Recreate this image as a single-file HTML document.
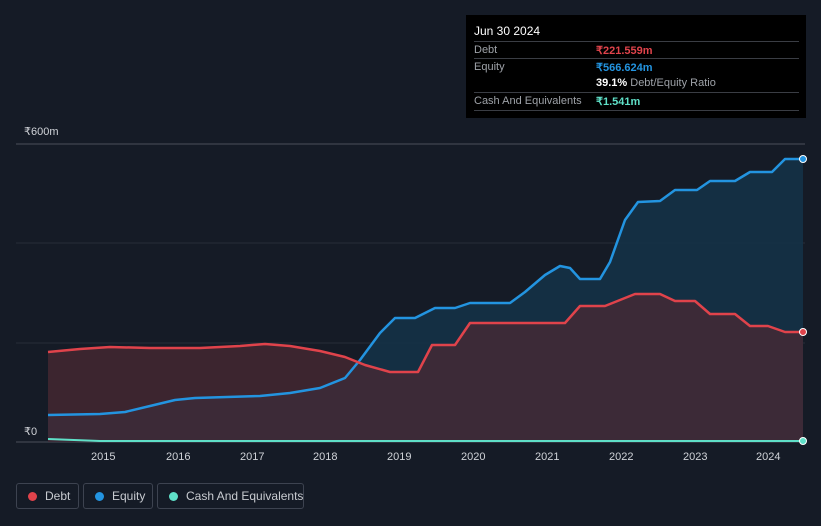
<!DOCTYPE html>
<html><head><meta charset="utf-8"><style>
body{margin:0;width:821px;height:526px;background:#151b26;font-family:"Liberation Sans",sans-serif;overflow:hidden;position:relative}
.tt{position:absolute;left:466px;top:15px;width:340px;height:103px;background:#000;color:#fff;font-size:11px}
.tt .h{position:absolute;left:8px;top:9px;font-size:12px}
.row{position:absolute;left:8px;width:325px;border-top:1px solid #3a3d44;height:17px}
.row span{position:absolute;top:2px;white-space:nowrap}
.lab{left:0;color:#9ea2a8}
.val{left:122px;font-weight:bold}
.leg{position:absolute;top:483px;height:26px;border:1px solid #3d4350;border-radius:3px;color:#c8cbd0;font-size:12px;box-sizing:border-box;white-space:nowrap}
.leg i{position:absolute;left:11px;top:8px;width:9px;height:9px;border-radius:50%}
.leg span{position:absolute;left:28px;top:5px}
.ax{position:absolute;color:#d0d3d8;font-size:11px}
</style></head><body>
<svg width="821" height="526" style="position:absolute;left:0;top:0">
<line x1="16" y1="144" x2="805" y2="144" stroke="#4a4f59" stroke-width="1"/>
<line x1="16" y1="243" x2="805" y2="243" stroke="#262c38" stroke-width="1"/>
<line x1="16" y1="343" x2="805" y2="343" stroke="#262c38" stroke-width="1"/>
<line x1="16" y1="442" x2="805" y2="442" stroke="#4a4f59" stroke-width="1"/>
<polygon fill="#143249" fill-opacity="0.85" points="48,415 100,414 125,412 150,406 175,400 195,398 260,396 290,393 320,388 345,378 360,360 380,333 395,318 415,318 435,308 455,308 470,303 510,303 525,292 545,275 560,266 570,268 580,279 600,279 610,262 625,220 638,202 660,201 675,190 697,190 710,181 735,181 750,172 772,172 785,159 803,159 803,442 48,442"/>
<polygon fill="#4a2a33" fill-opacity="0.75" points="48,352 80,349 110,347 150,348 200,348 240,346 265,344 290,346 320,351 345,357 365,365 390,372 418,372 432,345 455,345 470,323 565,323 580,306 605,306 635,294 660,294 675,301 695,301 710,314 735,314 750,326 768,326 785,332 803,332 803,442 48,442"/>
<polyline fill="none" stroke="#2394e0" stroke-width="2.5" stroke-linejoin="round" points="48,415 100,414 125,412 150,406 175,400 195,398 260,396 290,393 320,388 345,378 360,360 380,333 395,318 415,318 435,308 455,308 470,303 510,303 525,292 545,275 560,266 570,268 580,279 600,279 610,262 625,220 638,202 660,201 675,190 697,190 710,181 735,181 750,172 772,172 785,159 803,159"/>
<polyline fill="none" stroke="#e0434b" stroke-width="2.5" stroke-linejoin="round" points="48,352 80,349 110,347 150,348 200,348 240,346 265,344 290,346 320,351 345,357 365,365 390,372 418,372 432,345 455,345 470,323 565,323 580,306 605,306 635,294 660,294 675,301 695,301 710,314 735,314 750,326 768,326 785,332 803,332"/>
<polyline fill="none" stroke="#5fe0c8" stroke-width="2" points="48,439 100,441 803,441"/>
<circle cx="803" cy="159" r="3.5" fill="#2394e0" stroke="#fff" stroke-width="1"/>
<circle cx="803" cy="332" r="3.5" fill="#e0434b" stroke="#fff" stroke-width="1"/>
<circle cx="803" cy="441" r="3.5" fill="#5fe0c8" stroke="#fff" stroke-width="1"/>
</svg>
<div class="ax" style="left:24px;top:125px">₹600m</div>
<div class="ax" style="left:24px;top:425px">₹0</div>
<div class="ax" style="left:91px;top:451px">2015</div>
<div class="ax" style="left:166px;top:451px">2016</div>
<div class="ax" style="left:240px;top:451px">2017</div>
<div class="ax" style="left:313px;top:451px">2018</div>
<div class="ax" style="left:387px;top:451px">2019</div>
<div class="ax" style="left:461px;top:451px">2020</div>
<div class="ax" style="left:535px;top:451px">2021</div>
<div class="ax" style="left:609px;top:451px">2022</div>
<div class="ax" style="left:683px;top:451px">2023</div>
<div class="ax" style="left:756px;top:451px">2024</div>
<div class="tt">
<div class="h">Jun 30 2024</div>
<div class="row" style="top:26px"><span class="lab">Debt</span><span class="val" style="color:#e0434b">₹221.559m</span></div>
<div class="row" style="top:43px;border-bottom:none"><span class="lab">Equity</span><span class="val" style="color:#2394e0">₹566.624m</span></div>
<div class="row" style="top:60px;border-top:none"><span class="val" style="color:#fff">39.1% <b style="font-weight:normal;color:#9ea2a8">Debt/Equity Ratio</b></span></div>
<div class="row" style="top:77px;border-bottom:1px solid #3a3d44"><span class="lab">Cash And Equivalents</span><span class="val" style="color:#5fe0c8">₹1.541m</span></div>
</div>
<div class="leg" style="left:16px;width:63px"><i style="background:#e0434b"></i><span>Debt</span></div>
<div class="leg" style="left:83px;width:70px"><i style="background:#2394e0"></i><span>Equity</span></div>
<div class="leg" style="left:157px;width:147px"><i style="background:#5fe0c8"></i><span>Cash And Equivalents</span></div>
</body></html>
